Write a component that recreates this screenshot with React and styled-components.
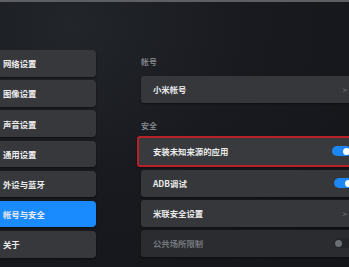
import React from 'react'
import styled, { createGlobalStyle } from 'styled-components'

const GlobalStyle = createGlobalStyle`
  html, body {
    margin: 0;
    padding: 0;
    background: #15171b;
  }
  body {
    font-family: "Noto Sans CJK SC", "Noto Sans", sans-serif;
  }
`

const Screen = styled.div`
  width: 349px;
  height: 267px;
  overflow: hidden;
  display: flex;
  flex-direction: column;
  background: radial-gradient(ellipse at 20% 10%, #22252a 0%, #181a1f 45%, #131519 100%);
`

const TopBezel = styled.div`
  height: 2px;
  flex: none;
  background: #5d5f63;
`

const Body = styled.div`
  flex: 1;
  display: flex;
  gap: 45px;
`

const Sidebar = styled.nav`
  width: 100px;
  flex: none;
  margin-left: -4px;
  display: flex;
  flex-direction: column;
`

const PageTitle = styled.h1`
  margin: 26px 0 0 -17px;
  height: 22px;
  font-size: 10px;
  line-height: 12px;
  font-weight: 700;
  color: #e6e6e6;
`

const MenuList = styled.ul`
  list-style: none;
  margin: 0;
  padding: 0;
  display: grid;
  grid-auto-rows: 26.5px;
  gap: 3.7px;
`

const MenuItem = styled.li`
  display: flex;
  align-items: center;
  padding-left: 7px;
  border-radius: 4px;
  font-size: 8.4px;
  font-weight: 600;
  color: #ececec;
  background: ${p => (p.$active ? '#1a8bff' : '#36383c')};
  box-shadow: 0 1px 2px rgba(0, 0, 0, 0.5);
`

const Content = styled.section`
  width: 216px;
  flex: none;
  display: flex;
  flex-direction: column;
`

const SectionLabel = styled.h2`
  margin: ${p => p.$top}px 0 0;
  height: ${p => p.$h}px;
  font-size: 8px;
  line-height: 10px;
  font-weight: 500;
  color: #8d9096;
`

const Rows = styled.div`
  display: flex;
  flex-direction: column;
  gap: 3.5px;
`

const Row = styled.div`
  height: 26.5px;
  display: flex;
  align-items: center;
  justify-content: space-between;
  padding: 0 8px 0 12px;
  border-radius: 3px;
  background: ${p => (p.$dim ? '#2a2c30' : '#35373b')};
  color: ${p => (p.$dim ? '#74777c' : '#eaeaea')};
  font-size: 8.4px;
  font-weight: 600;
  box-shadow: 0 1px 2px rgba(0, 0, 0, 0.45);
`

const FocusRow = styled(Row)`
  height: 31px;
  margin: 0 0 0 -4px;
  padding-left: 14px;
  border: 2px solid #b8212a;
  box-sizing: border-box;
  background: #383a3e;
`

const Chevron = styled.span`
  font-size: 8px;
  color: #7c7f84;
  margin-right: 2px;
  font-weight: 400;
`

const Toggle = styled.span`
  position: relative;
  width: 20px;
  height: 10px;
  border-radius: 5px;
  margin-right: -5px;
  background: ${p => (p.$on ? '#1e86f3' : '#222428')};
  &::after {
    content: '';
    position: absolute;
    top: 1.5px;
    ${p => (p.$on ? 'right: 2px;' : 'left: 1px;')}
    width: 7px;
    height: 7px;
    border-radius: 50%;
    background: ${p => (p.$on ? '#ffffff' : '#6c6f74')};
  }
`

const menu = ['网络设置', '图像设置', '声音设置', '通用设置', '外设与蓝牙', '帐号与安全', '关于']

export default function App() {
  return (
    <>
      <GlobalStyle />
      <Screen>
        <TopBezel />
        <Body>
          <Sidebar>
            <PageTitle>设置</PageTitle>
            <MenuList>
              {menu.map(m => (
                <MenuItem key={m} $active={m === '帐号与安全'}>{m}</MenuItem>
              ))}
            </MenuList>
          </Sidebar>
          <Content>
            <SectionLabel $top={55} $h={19}>帐号</SectionLabel>
            <Row>
              小米帐号
              <Chevron>&gt;</Chevron>
            </Row>
            <SectionLabel $top={18} $h={15}>安全</SectionLabel>
            <Rows>
              <FocusRow>
                安装未知来源的应用
                <Toggle $on />
              </FocusRow>
              <Row>
                ADB调试
                <Toggle $on />
              </Row>
              <Row>
                米联安全设置
                <Chevron>&gt;</Chevron>
              </Row>
              <Row $dim>
                公共场所限制
                <Toggle />
              </Row>
            </Rows>
          </Content>
        </Body>
      </Screen>
    </>
  )
}
